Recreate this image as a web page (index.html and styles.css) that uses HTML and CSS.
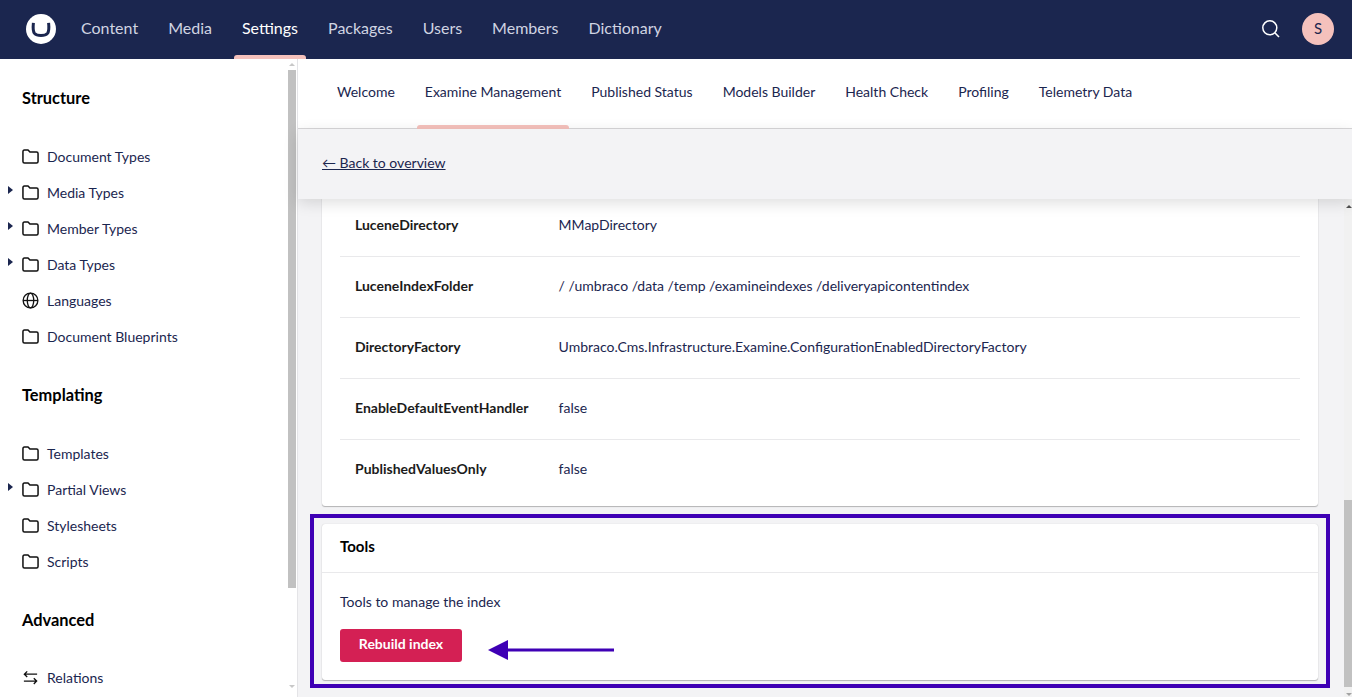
FILE: index.html
```html
<!DOCTYPE html>
<html lang="en">
<head>
<meta charset="utf-8">
<title>Examine Management</title>
<link rel="stylesheet" href="styles.css">
</head>
<body>
<header class="topbar">
  <svg class="logo" viewBox="0 0 30 30" aria-hidden="true"><circle cx="15" cy="15" r="15" fill="#fff"/><path d="M7.4 8.8 C6.9 13.5 7.1 17.5 8.5 19.4 C10 21.2 12.3 21.6 15 21.6 C17.7 21.6 20 21.2 21.5 19.4 C22.9 17.5 23.1 13.5 22.6 8.8" fill="none" stroke="#1b264f" stroke-width="3"/></svg>
  <nav class="mainnav">
    <a class="mainnav-item">Content</a>
    <a class="mainnav-item">Media</a>
    <a class="mainnav-item is-active">Settings</a>
    <a class="mainnav-item">Packages</a>
    <a class="mainnav-item">Users</a>
    <a class="mainnav-item">Members</a>
    <a class="mainnav-item">Dictionary</a>
  </nav>
  <div class="topbar-tools">
    <svg class="search" viewBox="0 0 20 20" aria-hidden="true"><circle cx="8.8" cy="8.8" r="7" fill="none" stroke="#fff" stroke-width="1.5"/><path d="M13.8 13.8 L18 18" stroke="#fff" stroke-width="1.6" fill="none"/></svg>
    <div class="avatar">S</div>
  </div>
</header>
<div class="shell">
  <aside class="sidebar">
    <div class="tree">
      <h3 class="tree-title">Structure</h3>
      <ul class="tree-list">
        <li class="tree-item"><svg class="ico" viewBox="0 0 18 16"><use href="#folder"/></svg>Document Types</li>
        <li class="tree-item has-caret"><svg class="ico" viewBox="0 0 18 16"><use href="#folder"/></svg>Media Types</li>
        <li class="tree-item has-caret"><svg class="ico" viewBox="0 0 18 16"><use href="#folder"/></svg>Member Types</li>
        <li class="tree-item has-caret"><svg class="ico" viewBox="0 0 18 16"><use href="#folder"/></svg>Data Types</li>
        <li class="tree-item"><svg class="ico" viewBox="0 0 18 18"><circle cx="9" cy="9" r="7.8" fill="none" stroke="#111" stroke-width="1.4"/><ellipse cx="9" cy="9" rx="3.4" ry="7.8" fill="none" stroke="#111" stroke-width="1.4"/><path d="M1.2 9 H16.8" stroke="#111" stroke-width="1.4"/></svg>Languages</li>
        <li class="tree-item"><svg class="ico" viewBox="0 0 18 16"><use href="#folder"/></svg>Document Blueprints</li>
      </ul>
      <h3 class="tree-title">Templating</h3>
      <ul class="tree-list">
        <li class="tree-item"><svg class="ico" viewBox="0 0 18 16"><use href="#folder"/></svg>Templates</li>
        <li class="tree-item has-caret"><svg class="ico" viewBox="0 0 18 16"><use href="#folder"/></svg>Partial Views</li>
        <li class="tree-item"><svg class="ico" viewBox="0 0 18 16"><use href="#folder"/></svg>Stylesheets</li>
        <li class="tree-item"><svg class="ico" viewBox="0 0 18 16"><use href="#folder"/></svg>Scripts</li>
      </ul>
      <h3 class="tree-title">Advanced</h3>
      <ul class="tree-list">
        <li class="tree-item"><svg class="ico" viewBox="0 0 18 18"><path d="M16 5.5 H2.5 M5.5 2.5 L2.5 5.5 L5.5 8.5 M2 12.8 H15.5 M12.5 9.8 L15.5 12.8 L12.5 15.8" fill="none" stroke="#111" stroke-width="1.4"/></svg>Relations</li>
      </ul>
    </div>
    <div class="scrollbar scrollbar-side"><i class="sb-up"></i><b class="sb-thumb"></b><i class="sb-down"></i></div>
  </aside>
  <main class="main">
    <nav class="tabs">
      <a class="tab">Welcome</a>
      <a class="tab is-active">Examine Management</a>
      <a class="tab">Published Status</a>
      <a class="tab">Models Builder</a>
      <a class="tab">Health Check</a>
      <a class="tab">Profiling</a>
      <a class="tab">Telemetry Data</a>
    </nav>
    <div class="backbar"><a class="backlink">← Back to overview</a></div>
    <div class="content">
      <section class="card card-table">
        <div class="row"><div class="row-key">LuceneDirectory</div><div class="row-val">MMapDirectory</div></div>
        <div class="row"><div class="row-key">LuceneIndexFolder</div><div class="row-val">/ /umbraco /data /temp /examineindexes /deliveryapicontentindex</div></div>
        <div class="row"><div class="row-key">DirectoryFactory</div><div class="row-val">Umbraco.Cms.Infrastructure.Examine.ConfigurationEnabledDirectoryFactory</div></div>
        <div class="row"><div class="row-key">EnableDefaultEventHandler</div><div class="row-val">false</div></div>
        <div class="row"><div class="row-key">PublishedValuesOnly</div><div class="row-val">false</div></div>
      </section>
      <section class="card card-tools">
        <div class="card-head">Tools</div>
        <div class="card-body">
          <p class="card-text">Tools to manage the index</p>
          <div class="actions">
            <button class="btn">Rebuild index</button>
            <svg class="arrow" viewBox="0 0 126 20" aria-hidden="true"><path d="M126 10 H20" stroke="#3f00b5" stroke-width="3" fill="none"/><path d="M0 10 L20 0 V20 Z" fill="#3f00b5"/></svg>
          </div>
        </div>
      </section>
      <div class="highlight"></div>
      <div class="scrollbar scrollbar-main"><i class="sb-up"></i><b class="sb-thumb"></b><i class="sb-down"></i></div>
    </div>
  </main>
</div>
<svg class="defs" aria-hidden="true"><symbol id="folder" viewBox="0 0 18 16"><path d="M1 3 Q1 1 2.6 1 H6.4 L8.4 3.2 H15.4 Q17 3.2 17 4.8 V13.2 Q17 14.8 15.4 14.8 H2.6 Q1 14.8 1 13.2 Z" fill="none" stroke="#111" stroke-width="1.6" stroke-linejoin="round"/></symbol></svg>
</body>
</html>
```
FILE: styles.css
```css
* { box-sizing: border-box; }
html, body { margin: 0; height: 100%; overflow: hidden; }
body { font-family: "Lato", sans-serif; font-size: 14px; color: #1b264f; background: #fff; display: flex; flex-direction: column; }
.defs { width: 0; height: 0; position: absolute; }

.topbar { height: 59px; flex: none; background: #1b264f; display: flex; align-items: center; padding-left: 26px; }
.logo { width: 30px; height: 30px; flex: none; margin-top: -1px; }
.mainnav { display: flex; height: 100%; margin-left: 10px; }
.mainnav-item { position: relative; display: flex; align-items: center; padding: 0 15px 5px; font-size: 16px; color: #d0d4e2; }
.mainnav-item.is-active { color: #fff; }
.mainnav-item.is-active::after { content: ""; position: absolute; left: 7px; right: 7px; bottom: 0; height: 4px; background: #f5c1bc; border-radius: 3px 3px 0 0; }
.topbar-tools { margin-left: auto; display: flex; align-items: center; gap: 21px; padding-right: 18px; margin-top: -1px; }
.search { width: 20px; height: 20px; }
.avatar { width: 32px; height: 32px; border-radius: 50%; background: #f5c1bc; display: flex; align-items: center; justify-content: center; padding-bottom: 2px; font-size: 15px; font-weight: 400; color: #1b264f; }

.shell { flex: 1; display: flex; min-height: 0; }
.sidebar { width: 298px; flex: none; position: relative; border-right: 1px solid #e4e4e7; overflow: hidden; }
.tree { padding: 29.4px 0 0 22px; }
.tree-title { margin: 0 0 30.1px; font-size: 16.4px; line-height: 20px; font-weight: 700; color: #000; }
.tree-list { list-style: none; margin: 0 0 30.5px; padding: 0; }
.tree-item { position: relative; height: 36px; display: flex; align-items: center; gap: 8px; font-size: 14px; color: #1b264f; }
.ico { width: 17px; height: 17px; flex: none; }
.has-caret::before { content: ""; position: absolute; left: -14px; top: 12px; border-left: 5px solid #1b264f; border-top: 4px solid transparent; border-bottom: 4px solid transparent; }

.scrollbar { position: absolute; top: 0; bottom: 0; width: 8px; }
.scrollbar-side { right: 1px; }
.scrollbar-main { right: 0; background: #f1f1f1; }
.sb-thumb { position: absolute; left: 0; right: 0; background: #c1c1c1; }
.scrollbar-side .sb-thumb { top: 11px; height: 518px; }
.scrollbar-main .sb-thumb { top: 301px; height: 187px; }
.sb-up, .sb-down { position: absolute; left: 1px; width: 0; height: 0; border-left: 3px solid transparent; border-right: 3px solid transparent; }
.sb-up { top: 4px; border-bottom: 3px solid #c8c8c8; }
.sb-down { bottom: 9px; border-top: 3px solid #c8c8c8; }
.scrollbar-main .sb-up { left: 2px; top: 6px; border-bottom-color: #505050; }
.scrollbar-main .sb-down { left: 2px; bottom: 1px; border-top-color: #a3a3a3; }

.main { flex: 1; min-width: 0; display: flex; flex-direction: column; background: #f3f3f5; }
.tabs { height: 70px; flex: none; background: #fff; border-bottom: 1px solid #d8d7d9; display: flex; padding-left: 24px; }
.tab { position: relative; display: flex; align-items: center; padding: 0 15px 4px; font-size: 14px; color: #1b264f; }
.tab.is-active::after { content: ""; position: absolute; left: 7px; right: 7px; bottom: -1px; height: 4px; background: #f5c1bc; border-radius: 3px 3px 0 0; }
.backbar { height: 70px; flex: none; background: #f3f3f5; display: flex; align-items: center; padding: 0 0 4px 24px; position: relative; z-index: 1; box-shadow: 0 4px 14px rgba(0,0,0,.13); }
.backlink { color: #1b264f; text-decoration: underline; font-size: 14px; }

.content { flex: 1; min-height: 0; position: relative; overflow: hidden; display: flex; flex-direction: column; justify-content: flex-end; gap: 18px; padding: 0 34px 17px 24px; }
.card { flex: none; background: #fff; border-radius: 3px; box-shadow: 0 1px 1px rgba(0,0,0,.25), 0 0 1px rgba(0,0,0,.2); }
.card-table { padding: 0 18px; border-radius: 0 0 3px 3px; }
.row { height: 61px; display: flex; align-items: center; padding: 0 0 4px 15px; border-bottom: 1px solid #e9e9eb; font-size: 14px; }
.row:last-child { border-bottom: 0; height: 66px; padding-bottom: 10px; }
.row-key { width: 203.6px; flex: none; font-weight: 700; color: #1b1b1b; }
.row-val { color: #1b264f; }
.card-head { height: 49px; padding: 0 18px 4px; display: flex; align-items: center; border-bottom: 1px solid #e9e9eb; font-size: 15px; font-weight: 700; color: #000; }
.card-body { padding: 20px 18px 18px; }
.card-text { margin: 0 0 18px; line-height: 18px; font-size: 14px; color: #1b264f; }
.actions { display: flex; align-items: center; gap: 26px; }
.btn { width: 122px; height: 33px; border: 0; border-radius: 3px; background: #d42054; color: #fff; font-family: inherit; font-size: 14px; font-weight: 700; padding: 0 0 4px; }
.arrow { width: 126px; height: 20px; margin-top: 9px; }
.highlight { position: absolute; left: 12px; right: 22px; bottom: 9px; height: 174px; border: 4px solid #3f00b5; pointer-events: none; }
```
